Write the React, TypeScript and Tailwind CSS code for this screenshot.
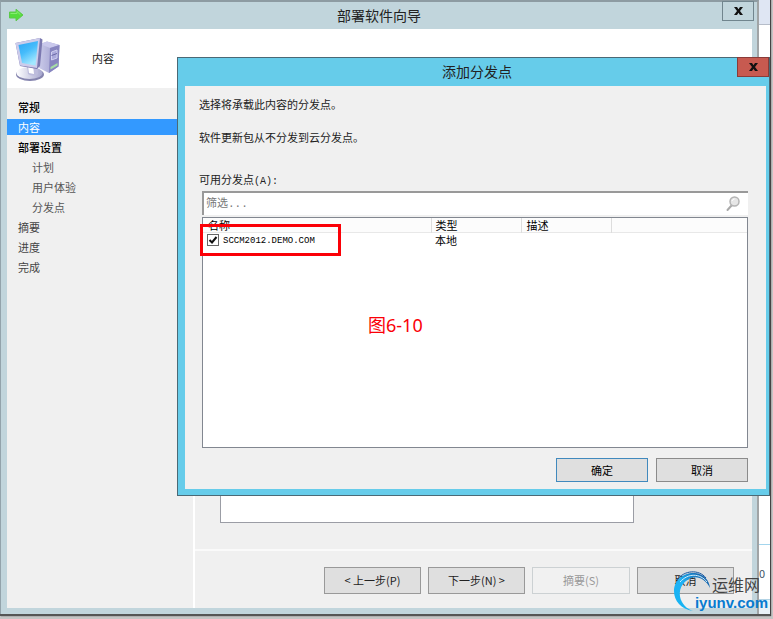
import React, { useState } from 'react';

interface Step {
  label: string;
  kind?: 'done' | 'active' | 'child';
}

const steps: Step[] = [
  { label: '常规', kind: 'done' },
  { label: '内容', kind: 'active' },
  { label: '部署设置', kind: 'done' },
  { label: '计划', kind: 'child' },
  { label: '用户体验', kind: 'child' },
  { label: '分发点', kind: 'child' },
  { label: '摘要' },
  { label: '进度' },
  { label: '完成' },
];

const points = [{ name: 'SCCM2012.DEMO.COM', type: '本地', description: '' }];

function stepClass(kind?: Step['kind']) {
  if (kind === 'active') return 'bg-[#3399ff] pl-[11px] text-white';
  if (kind === 'done') return 'pl-[11px] font-medium text-black';
  if (kind === 'child') return 'pl-[25px] text-[#555]';
  return 'pl-[11px] text-[#444]';
}

function ArrowIcon() {
  return (
    <svg className="ml-[7px] h-[14px] w-[16px]" viewBox="0 0 16 14" aria-hidden="true">
      <path d="M1.5 4H8V1.2L15 7L8 12.8V10H1.5Z" fill="#55dc3c" stroke="#5cc94a" strokeWidth="1" />
      <path d="M2.5 5.5H9V3.5L12.5 6.8" fill="none" stroke="#86ec70" strokeWidth="1" />
    </svg>
  );
}

function ComputerIcon() {
  return (
    <svg className="h-[46px] w-[48px]" viewBox="0 0 48 46" aria-hidden="true">
      <defs>
        <linearGradient id="screen" x1="0" y1="0" x2="0.5" y2="1">
          <stop offset="0" stopColor="#2ba4f4" />
          <stop offset="0.5" stopColor="#46bcfb" />
          <stop offset="1" stopColor="#a2e7ff" />
        </linearGradient>
        <linearGradient id="tower" x1="0" y1="0" x2="1" y2="0">
          <stop offset="0" stopColor="#c9cae9" />
          <stop offset="1" stopColor="#9a98cb" />
        </linearGradient>
        <linearGradient id="base" x1="0" y1="0" x2="1" y2="0">
          <stop offset="0" stopColor="#ffffff" />
          <stop offset="1" stopColor="#a6a6ce" />
        </linearGradient>
      </defs>
      <path d="M25 8L32 5.500L44.500 9L43.500 30.500L34 37L24 32Z" fill="url(#tower)" />
      <path d="M25 8L32 5.500L44.500 9L35 12Z" fill="#c9c8ec" />
      <path d="M35 12L44.500 9L43.500 30.500L34 37Z" fill="#8785c0" />
      <path d="M36.500 16L42 14V22L36.500 24Z" fill="#aaa9dc" stroke="#d0cff0" strokeWidth="1" />
      <path d="M36.500 19.500L42 17.500" stroke="#6866a4" strokeWidth="1" />
      <path d="M35.500 31L42.500 27V29.500L35.500 33.500Z" fill="#a5dda4" />
      <ellipse cx="15" cy="38.500" rx="14" ry="6.500" fill="#8584ae" />
      <ellipse cx="14.500" cy="37" rx="13" ry="6" fill="url(#base)" />
      <path d="M12 29L22 28L23 38Q18 41 13 38Z" fill="#bdbcdc" />
      <path d="M13 30L18 29L19 38L14 37Z" fill="#fff" />
      <path d="M0.500 7L25 2L27.500 3.500L25 30L22 33L5 30Z" fill="#7b78b0" />
      <path d="M0.500 7L25 2L22 32L5 29.500Z" fill="#cccceb" />
      <path d="M3.500 9L23 5L20.500 29.500L7 27Z" fill="url(#screen)" />
    </svg>
  );
}

function Watermark() {
  return (
    <div className="pointer-events-none absolute right-[2px] bottom-[2px] flex h-[42px] items-stretch">
      <svg className="h-[42px] w-[40px]" viewBox="0 0 40 42" aria-hidden="true">
        <defs>
          <linearGradient id="swirl" x1="0" y1="1" x2="1" y2="0">
            <stop offset="0" stopColor="#13b4f2" />
            <stop offset="0.5" stopColor="#1fb2f5" />
            <stop offset="1" stopColor="#12458f" />
          </linearGradient>
        </defs>
        <path d="M20 41C8 39 1 31 1 21C1 9 12 2 22 3C31 4 36 10 37 18C32 8 23 5 16 9C6 14 5 25 9 32C12 37 15 39 20 41Z" fill="url(#swirl)" />
        <path d="M4 10C11 0 26 -1 33 8" fill="none" stroke="#17559e" strokeWidth="1" />
        <path d="M7 12C15 3 27 3 34 12" fill="none" stroke="#d5effb" strokeWidth="1" />
      </svg>
      <div className="-ml-[18px] flex flex-col">
        <span className="pt-[3px] pl-[17px] text-[16px] leading-[22px] text-[#444]">运维网</span>
        <span className="font-['Liberation_Sans',sans-serif] text-[15px] leading-[16px] font-bold text-[#087bd0]">iyunv.com</span>
      </div>
    </div>
  );
}

function CloseButton({ className }: { className: string }) {
  return (
    <button aria-label="关闭" className={`flex h-[20px] w-[32px] items-center justify-center justify-self-end border ${className}`}>
      <svg className="h-[8px] w-[9px]" viewBox="0 0 9 8" aria-hidden="true">
        <path d="M0 0H3L4.500 2.300L6 0H9L6 4L9 8H6L4.500 5.700L3 8H0L3 4Z" fill="#111" />
      </svg>
    </button>
  );
}

function DistributionDialog() {
  const [filter, setFilter] = useState('');
  const [checked, setChecked] = useState(true);

  return (
    <section
      role="dialog"
      aria-labelledby="dialog-title"
      className="absolute top-[57px] right-0 bottom-[118px] left-[177px] flex flex-col border border-[#4b6975] bg-[#66ccea] pr-[3px] pb-[6px] pl-[7px]"
    >
      <header className="-mr-[3px] grid h-[28px] shrink-0 grid-cols-[1fr_auto_1fr]">
        <span />
        <h2 id="dialog-title" className="text-[14px] leading-[26px] text-[#222]">添加分发点</h2>
        <CloseButton className="-mt-px border-[#8a3b38] bg-[#c75a50]" />
      </header>
      <div className="flex min-h-0 flex-1 flex-col bg-[#f0f0f0] pt-[10px] pr-[18px] pb-[7px] pl-[14px]">
        <p className="leading-4">选择将承载此内容的分发点。</p>
        <p className="mt-[17px] leading-4">软件更新包从不分发到云分发点。</p>
        <label htmlFor="filter" className="mt-[26px] flex h-4 items-baseline leading-4">
          可用分发点<span className="font-['Liberation_Mono',monospace] text-[10px]">(A):</span>
        </label>
        <div className="mt-1 ml-[3px] flex h-[24px] shrink-0 items-center border-t-2 border-l-2 border-[#999] bg-white pr-[7px]">
          <input
            id="filter"
            value={filter}
            onChange={(e) => setFilter(e.target.value)}
            placeholder="筛选..."
            className="h-full min-w-0 flex-1 pl-[2px] font-['Liberation_Mono','Noto_Sans_CJK_SC',monospace] outline-none placeholder:text-[#777]"
          />
          <svg className="h-[16px] w-[15px]" viewBox="0 0 15 16" aria-hidden="true">
            <path d="M6 9L1.500 14" stroke="#aaa" strokeWidth="2" strokeLinecap="round" />
            <circle cx="8.500" cy="5.500" r="4.500" fill="#e6e6e6" stroke="#b4b4b4" strokeWidth="1.500" />
            <path d="M6 5Q6.500 3 8.500 3" fill="none" stroke="#fff" strokeWidth="1" />
          </svg>
        </div>
        <div className="relative mt-[2px] ml-[3px] min-h-0 flex-1 border border-[#828790] bg-white">
          <table className="w-full table-fixed border-collapse text-left text-black">
            <colgroup>
              <col className="w-[228px]" />
              <col className="w-[90px]" />
              <col className="w-[90px]" />
              <col />
            </colgroup>
            <thead>
              <tr className="h-[14px] border-b border-[#e8e8e8] bg-[#fcfcfc]">
                <th className="border-r border-[#ddd] p-0 pl-[5px] leading-[14px] font-normal">名称</th>
                <th className="border-r border-[#ddd] p-0 pl-[4px] leading-[14px] font-normal">类型</th>
                <th className="border-r border-[#ddd] p-0 pl-[5px] leading-[14px] font-normal">描述</th>
                <td className="p-0" />
              </tr>
            </thead>
            <tbody>
              {points.map((p) => (
                <tr key={p.name}>
                  <td className="p-0 pl-[4px]">
                    <label className="flex h-[14px] items-center gap-[4px]">
                      <span className="grid h-[12px] w-[12px]">
                        <input
                          type="checkbox"
                          checked={checked}
                          onChange={(e) => setChecked(e.target.checked)}
                          className="peer col-start-1 row-start-1 appearance-none border border-[#666] bg-white"
                        />
                        <svg className="pointer-events-none invisible col-start-1 row-start-1 h-[12px] w-[12px] peer-checked:visible" viewBox="0 0 12 12" aria-hidden="true">
                          <path d="M2.500 6L5 8.500L9.500 3" fill="none" stroke="#111" strokeWidth="2" />
                        </svg>
                      </span>
                      <span className="pt-[2px] font-['Liberation_Mono',monospace] text-[9px] leading-[12px]">{p.name}</span>
                    </label>
                  </td>
                  <td className="p-0 pl-[4px] leading-[14px]">{p.type}</td>
                  <td className="p-0 pl-[5px]">{p.description}</td>
                  <td className="p-0" />
                </tr>
              ))}
            </tbody>
          </table>
          {/* highlight around the selected point */}
          <div className="pointer-events-none absolute top-[6px] -left-[3px] h-[32px] w-[141px] border-[3px] border-[#fb0007]" />
          <p className="absolute top-[95px] left-[165px] font-['Noto_Sans','Noto_Sans_CJK_SC',sans-serif] text-[18px] leading-[24px] text-[#fb0007]">
            图6-10
          </p>
        </div>
        <div className="mt-[10px] flex shrink-0 justify-end gap-[8px]">
          <button className="h-[24px] w-[92px] border border-[#4189bd] bg-[#dfdfdf] text-black">确定</button>
          <button className="h-[24px] w-[92px] border border-[#8b8b8b] bg-[#dfdfdf] text-black">取消</button>
        </div>
      </div>
    </section>
  );
}

export default function App() {
  return (
    <div className="flex min-h-screen flex-col bg-[#c4c4c4] pr-[3px] pb-[3px] font-['Noto_Sans_CJK_SC',sans-serif] text-[11px] text-[#222]">
      <main className="relative flex flex-1 border-b-2 border-[#555] bg-white shadow-[1px_0_1px_#444]">
        <div className="flex min-w-0 flex-1 flex-col border-t-2 border-r-2 border-l border-t-[#8d9ba2] border-r-[#a0a4a6] border-l-[#93a3ab] bg-[#c1d5dc] pr-[5px] pb-[6px] pl-[6px]">
          <header className="-mr-[5px] -ml-[6px] grid h-[27px] shrink-0 grid-cols-[1fr_auto_1fr]">
            <div className="pt-[6px]">
              <ArrowIcon />
            </div>
            <h1 className="text-[14px] leading-[26px] text-[#222]">部署软件向导</h1>
            <CloseButton className="mr-[3px] -mt-px border-[#71858e]" />
          </header>
          <div className="flex h-[59px] shrink-0 items-center bg-white pl-[8px]">
            <ComputerIcon />
            <h2 className="pl-[29px]">内容</h2>
          </div>
          <div className="flex flex-1 bg-[#f0f0f0]">
            <nav className="w-[188px] border-r-2 border-white pt-[9px]">
              <ol>
                {steps.map((s) => (
                  <li key={s.label} className="flex h-5 items-center">
                    <a
                      href="#"
                      aria-current={s.kind === 'active' ? 'step' : undefined}
                      className={`block w-full leading-4 ${stepClass(s.kind)}`}
                    >
                      {s.label}
                    </a>
                  </li>
                ))}
              </ol>
            </nav>
            <div className="flex flex-1 flex-col">
              <div className="flex flex-1 flex-col pt-[60px] pr-[118px] pb-[26px] pl-[25px]">
                <div className="flex-1 border border-[#9b9da5] bg-white" />
              </div>
              <footer className="flex justify-end gap-[7px] border-t-2 border-[#fafafa] pt-[16px] pr-[18px] pb-[14px]">
                <button className="h-[27px] w-[97px] border border-[#999] bg-[#dfdfdf]">&lt; 上一步(P)</button>
                <button className="h-[27px] w-[97px] border border-[#999] bg-[#dfdfdf]">下一步(N) &gt;</button>
                <button disabled className="h-[27px] w-[98px] border border-[#ccd1d3] bg-[#f1f1f1] text-[#999]">摘要(S)</button>
                <button className="h-[27px] w-[97px] border border-[#999] bg-[#dfdfdf]">取消</button>
              </footer>
            </div>
          </div>
        </div>
        {/* sliver of the console window behind the wizard */}
        <div className="flex w-[11px] flex-col justify-between bg-white">
          <div className="h-[25px] border-b border-[#b6bdc9] bg-[#dfe6f3]" />
          <div className="flex h-[70px] flex-col justify-between border-t border-[#a3d5ed]">
            <span className="pt-[20px] leading-4 text-[#456]">0</span>
            <span className="h-[15px] border-t border-[#b2d3e5] bg-[#e9f1f7]" />
          </div>
        </div>
        <DistributionDialog />
        <Watermark />
      </main>
    </div>
  );
}
